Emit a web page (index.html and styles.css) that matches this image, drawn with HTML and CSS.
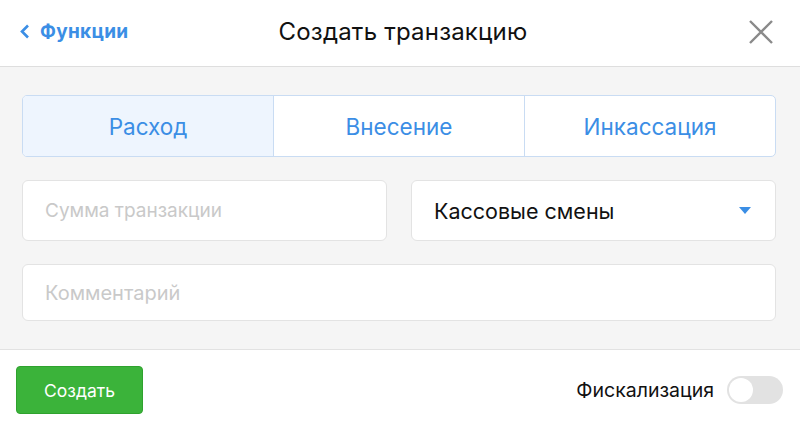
FILE: index.html
```html
<!DOCTYPE html>
<html lang="ru">
<head>
    <meta charset="UTF-8">
    <meta name="viewport" content="width=device-width, initial-scale=1.0">
    <title>Создать транзакцию</title>
    <link rel="stylesheet" href="styles.css">
</head>
<body>
    <div class="modal">
        <div class="cabecalho">
            <a class="voltar" href="#">
                <svg width="11" height="15" viewBox="0 0 11 15"><path d="M9 1.5 L3 7.5 L9 13.5" fill="none" stroke="#3b8ee5" stroke-width="2.6"/></svg>
                Функции
            </a>
            <h1 class="titulo">Создать транзакцию</h1>
            <a class="fechar" href="#">
                <svg width="24" height="24" viewBox="0 0 24 24"><path d="M1 1 L23 23 M23 1 L1 23" stroke="#8a8a8a" stroke-width="2.4"/></svg>
            </a>
        </div>

        <div class="conteudo">
            <div class="abas">
                <div class="aba ativa">Расход</div>
                <div class="aba">Внесение</div>
                <div class="aba">Инкассация</div>
            </div>
            <div class="linha">
                <input class="campo" type="text" placeholder="Сумма транзакции">
                <div class="campo seletor">
                    <span>Кассовые смены</span>
                    <span class="seta"></span>
                </div>
            </div>
            <input class="campo comentario" type="text" placeholder="Комментарий">
        </div>

        <div class="rodape">
            <button class="criar">Создать</button>
            <label class="fiscal">
                Фискализация
                <span class="interruptor"><span class="bolinha"></span></span>
            </label>
        </div>
    </div>
</body>
</html>
```

FILE: styles.css
```css
* {
    box-sizing: border-box;
}
body {
    margin: 0;
    font-family: Inter, "Liberation Sans", Arial, sans-serif;
    background-color: #fff;
}
.modal {
    width: 800px;
    height: 428px;
    display: flex;
    flex-direction: column;
}
.cabecalho {
    height: 67px;
    display: flex;
    align-items: center;
    justify-content: space-between;
    padding: 0 27px 0 19px;
    border-bottom: 1px solid #dedede;
    position: relative;
}
.voltar {
    display: flex;
    align-items: center;
    gap: 10px;
    color: #3b8ee5;
    font-weight: 700;
    font-size: 19px;
    letter-spacing: 0.3px;
    text-decoration: none;
    margin-top: -3px;
}
.titulo {
    position: absolute;
    left: 6px;
    right: 0;
    text-align: center;
    margin: 0;
    margin-top: -3px;
    font-size: 24px;
    font-weight: normal;
    letter-spacing: 0.2px;
    color: #111;
    pointer-events: none;
}
.fechar {
    display: flex;
    margin-top: -3px;
}
.conteudo {
    background-color: #f5f5f5;
    height: 283px;
    padding: 28px 24px 0 22px;
    border-bottom: 1px solid #e2e2e2;
}
.abas {
    display: flex;
    height: 62px;
    border: 1px solid #c9dcf3;
    border-radius: 5px;
    background-color: #fff;
    overflow: hidden;
}
.aba {
    flex: 1;
    display: flex;
    align-items: center;
    justify-content: center;
    color: #3b8ee5;
    font-size: 22.5px;
    border-left: 1px solid #c9dcf3;
}
.aba:first-child {
    border-left: none;
}
.aba.ativa {
    background-color: #eef5fe;
}
.linha {
    display: flex;
    gap: 24px;
    margin-top: 23px;
}
.campo {
    flex: 1;
    height: 61px;
    border: 1px solid #e3e3e3;
    border-radius: 6px;
    background-color: #fff;
    padding: 0 22px;
    font-family: inherit;
    font-size: 19px;
    color: #111;
    outline: none;
}
.campo::placeholder {
    color: #c9c9c9;
}
.seletor {
    display: flex;
    align-items: center;
    justify-content: space-between;
    font-size: 21.5px;
}
.seta {
    width: 0;
    height: 0;
    border-left: 6px solid transparent;
    border-right: 6px solid transparent;
    border-top: 7px solid #3b8ee5;
    margin-right: 2px;
}
.comentario {
    display: block;
    width: 100%;
    height: 57px;
    margin-top: 23px;
    font-size: 20px;
}
.rodape {
    flex: 1;
    display: flex;
    align-items: center;
    justify-content: space-between;
    padding: 2px 17px 0 16px;
}
.criar {
    width: 127px;
    height: 48px;
    background-color: #3bb33a;
    border: 1px solid #2fa22e;
    border-radius: 4px;
    color: #fff;
    font-family: inherit;
    font-size: 17.5px;
    cursor: pointer;
}
.fiscal {
    display: flex;
    align-items: center;
    gap: 13px;
    font-size: 19.5px;
    color: #111;
}
.interruptor {
    width: 56px;
    height: 28px;
    border-radius: 14px;
    background-color: #e2e2e2;
    padding: 2px;
    display: flex;
}
.bolinha {
    width: 24px;
    height: 24px;
    border-radius: 50%;
    background-color: #fff;
}
```
